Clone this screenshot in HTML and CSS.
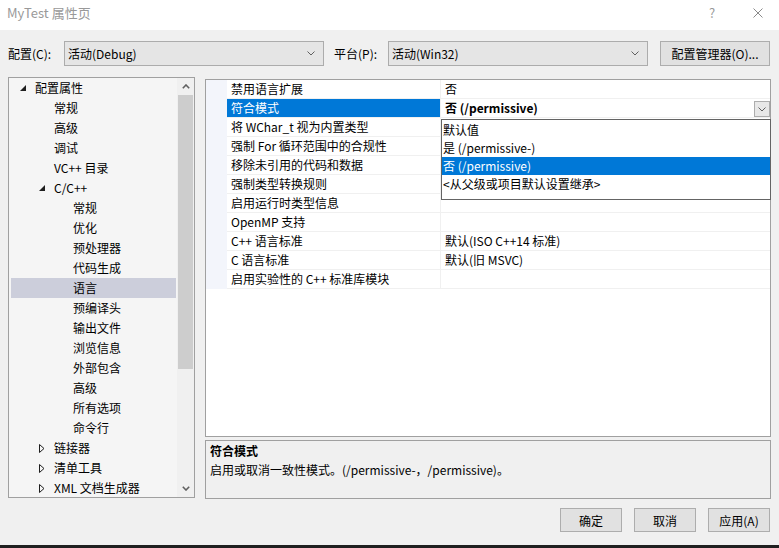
FILE: index.html
```html
<!DOCTYPE html>
<html lang="zh-CN">
<head>
<meta charset="utf-8">
<title>MyTest 属性页</title>
<link rel="stylesheet" href="styles.css">
</head>
<body>
<div class="window">
  <div class="titlebar">
    <span class="title">MyTest 属性页</span>
    <span class="tb-help">?</span>
    <svg class="tb-close" width="10" height="10" viewBox="0 0 10 10"><path d="M0.5 0.5 L9.5 9.5 M9.5 0.5 L0.5 9.5" stroke="#8a8a8a" stroke-width="1" fill="none"/></svg>
  </div>

  <div class="config-row">
    <span class="lbl lbl-config">配置(C):</span>
    <div class="combo"><span class="combo-text">活动(Debug)</span><svg width="8" height="5" viewBox="0 0 8 5"><path d="M0.5 0.5 L4 4 L7.5 0.5" stroke="#606060" fill="none"/></svg></div>
    <span class="lbl lbl-platform">平台(P):</span>
    <div class="combo"><span class="combo-text">活动(Win32)</span><svg width="8" height="5" viewBox="0 0 8 5"><path d="M0.5 0.5 L4 4 L7.5 0.5" stroke="#606060" fill="none"/></svg></div>
    <button class="btn btn-manager">配置管理器(O)...</button>
  </div>

  <div class="main">
    <div class="tree">
      <ul class="tree-list">
        <li class="node l0"><span class="tg"><svg width="6" height="6" viewBox="0 0 6 6"><path d="M6 0 L6 6 L0 6 Z" fill="#1e1e1e"/></svg></span>配置属性</li>
        <li class="node l1"><span class="tg"></span>常规</li>
        <li class="node l1"><span class="tg"></span>高级</li>
        <li class="node l1"><span class="tg"></span>调试</li>
        <li class="node l1"><span class="tg"></span>VC++ 目录</li>
        <li class="node l1"><span class="tg"><svg width="6" height="6" viewBox="0 0 6 6"><path d="M6 0 L6 6 L0 6 Z" fill="#1e1e1e"/></svg></span>C/C++</li>
        <li class="node l2"><span class="tg"></span>常规</li>
        <li class="node l2"><span class="tg"></span>优化</li>
        <li class="node l2"><span class="tg"></span>预处理器</li>
        <li class="node l2"><span class="tg"></span>代码生成</li>
        <li class="node l2 sel"><span class="tg"></span>语言</li>
        <li class="node l2"><span class="tg"></span>预编译头</li>
        <li class="node l2"><span class="tg"></span>输出文件</li>
        <li class="node l2"><span class="tg"></span>浏览信息</li>
        <li class="node l2"><span class="tg"></span>外部包含</li>
        <li class="node l2"><span class="tg"></span>高级</li>
        <li class="node l2"><span class="tg"></span>所有选项</li>
        <li class="node l2"><span class="tg"></span>命令行</li>
        <li class="node l1"><span class="tg"><svg width="6" height="9" viewBox="0 0 6 9"><path d="M0.5 0.5 L5 4.5 L0.5 8.5 Z" stroke="#1e1e1e" fill="none"/></svg></span>链接器</li>
        <li class="node l1"><span class="tg"><svg width="6" height="9" viewBox="0 0 6 9"><path d="M0.5 0.5 L5 4.5 L0.5 8.5 Z" stroke="#1e1e1e" fill="none"/></svg></span>清单工具</li>
        <li class="node l1"><span class="tg"><svg width="6" height="9" viewBox="0 0 6 9"><path d="M0.5 0.5 L5 4.5 L0.5 8.5 Z" stroke="#1e1e1e" fill="none"/></svg></span>XML 文档生成器</li>
      </ul>
      <div class="vscroll">
        <div class="sb-btn"><svg width="8" height="5" viewBox="0 0 8 5"><path d="M0.8 4.2 L4 1 L7.2 4.2" stroke="#606060" stroke-width="1.6" fill="none"/></svg></div>
        <div class="sb-thumb"></div>
        <div class="sb-space"></div>
        <div class="sb-btn"><svg width="8" height="5" viewBox="0 0 8 5"><path d="M0.8 0.8 L4 4 L7.2 0.8" stroke="#606060" stroke-width="1.6" fill="none"/></svg></div>
      </div>
    </div>

    <div class="right">
      <div class="grid">
        <div class="row"><div class="gut"></div><div class="cell name">禁用语言扩展</div><div class="cell value">否</div></div>
        <div class="row sel"><div class="gut"></div><div class="cell name">符合模式</div><div class="cell value"><b class="val-bold">否 (/permissive)</b><span class="dd-btn"><svg width="8" height="5" viewBox="0 0 8 5"><path d="M0.5 0.5 L4 4 L7.5 0.5" stroke="#606060" fill="none"/></svg></span></div></div>
        <div class="row"><div class="gut"></div><div class="cell name">将 WChar_t 视为内置类型</div><div class="cell value"></div></div>
        <div class="row"><div class="gut"></div><div class="cell name">强制 For 循环范围中的合规性</div><div class="cell value"></div></div>
        <div class="row"><div class="gut"></div><div class="cell name">移除未引用的代码和数据</div><div class="cell value"></div></div>
        <div class="row"><div class="gut"></div><div class="cell name">强制类型转换规则</div><div class="cell value"></div></div>
        <div class="row"><div class="gut"></div><div class="cell name">启用运行时类型信息</div><div class="cell value"></div></div>
        <div class="row"><div class="gut"></div><div class="cell name">OpenMP 支持</div><div class="cell value"></div></div>
        <div class="row"><div class="gut"></div><div class="cell name">C++ 语言标准</div><div class="cell value">默认(ISO C++14 标准)</div></div>
        <div class="row"><div class="gut"></div><div class="cell name">C 语言标准</div><div class="cell value">默认(旧 MSVC)</div></div>
        <div class="row"><div class="gut"></div><div class="cell name">启用实验性的 C++ 标准库模块</div><div class="cell value"></div></div>
        <ul class="dropdown">
          <li class="dd-item">默认值</li>
          <li class="dd-item">是 (/permissive-)</li>
          <li class="dd-item sel">否 (/permissive)</li>
          <li class="dd-item">&lt;从父级或项目默认设置继承&gt;</li>
        </ul>
      </div>
      <div class="desc">
        <div class="desc-title">符合模式</div>
        <div class="desc-text">启用或取消一致性模式。(/permissive-，/permissive)。</div>
      </div>
    </div>
  </div>

  <div class="footer">
    <button class="btn btn-foot">确定</button>
    <button class="btn btn-foot">取消</button>
    <button class="btn btn-foot">应用(A)</button>
  </div>
</div>
</body>
</html>
```

FILE: styles.css
```css
* {
  box-sizing: border-box;
  margin: 0;
  padding: 0;
}

html, body {
  width: 779px;
  height: 548px;
  overflow: hidden;
}

body {
  background: #1f1f1f;
  font-family: "Microsoft YaHei UI", "Noto Sans CJK SC", "Noto Sans", sans-serif;
  font-size: 12px;
  color: #000;
}

.window {
  height: 545px;
  background: #f0f0f0;
  display: flex;
  flex-direction: column;
}

/* title bar */
.titlebar {
  height: 30px;
  background: #fff;
  display: flex;
  align-items: flex-start;
  padding: 0 16px 0 7px;
  color: #999;
  line-height: 26px;
}

.title {
  flex: 1;
  font-size: 13px;
}

.tb-help {
  width: 12px;
  text-align: center;
  font-size: 13px;
  margin-right: 35px;
}

.tb-close {
  margin-top: 8px;
}

/* config row */
.config-row {
  display: flex;
  align-items: center;
  height: 25px;
  margin-top: 11px;
  padding-left: 8px;
}

.lbl-config {
  width: 56px;
}

.lbl-platform {
  width: 54px;
  margin-left: 10px;
}

.combo {
  width: 260px;
  height: 25px;
  border: 1px solid #acacac;
  background: #e5e5e5;
  display: flex;
  align-items: center;
  padding: 0 8px 0 3px;
}

.combo-text {
  flex: 1;
}

.btn {
  border: 1px solid #adadad;
  background: #e1e1e1;
  font: inherit;
  color: #000;
}

.btn-manager {
  margin-left: 12px;
  width: 110px;
  height: 25px;
}

/* main area */
.main {
  display: flex;
  align-items: flex-start;
  margin-top: 11px;
  padding-left: 8px;
}

.tree {
  width: 187px;
  height: 421px;
  border: 1px solid #a0a0a0;
  background: #f5f5f5;
  display: flex;
  overflow: hidden;
}

.tree-list {
  list-style: none;
  width: 167px;
  padding-left: 2px;
  margin-right: 1px;
  flex: none;
}

.node {
  height: 20px;
  line-height: 20px;
  display: flex;
  align-items: center;
  white-space: nowrap;
}

.node.l0 { padding-left: 9px; }
.node.l1 { padding-left: 28px; }
.node.l2 { padding-left: 47px; }

.node.sel {
  background: #cccedb;
}

.tg {
  width: 15px;
  flex: none;
  display: flex;
  align-items: center;
}

.vscroll {
  width: 17px;
  flex: none;
  background: #f0f0f0;
  display: flex;
  flex-direction: column;
  align-items: center;
}

.sb-btn {
  width: 17px;
  height: 17px;
  display: flex;
  align-items: center;
  justify-content: center;
}

.sb-thumb {
  width: 15px;
  height: 274px;
  background: #cdcdcd;
}

.sb-space {
  flex: 1;
}

/* right column */
.right {
  width: 566px;
  margin-left: 10px;
  margin-top: 2px;
  display: flex;
  flex-direction: column;
  gap: 3px;
}

.grid {
  height: 358px;
  border: 1px solid #a0a0a0;
  background: #fff;
  position: relative;
}

.row {
  display: grid;
  grid-template-columns: 21px 214px 1fr;
  height: 19px;
}

.gut {
  background: #f3f5fb;
}

.cell {
  border-bottom: 1px solid #f0f0f0;
  line-height: 18px;
  padding-left: 4px;
  white-space: nowrap;
  overflow: hidden;
}

.name {
  border-right: 1px solid #f0f0f0;
}

.row.sel .name {
  background: #0078d7;
  color: #fff;
}

.row.sel .value {
  display: flex;
  align-items: flex-start;
}

.val-bold {
  flex: 1;
  font-weight: bold;
}

.dd-btn {
  width: 16px;
  height: 16px;
  margin-top: 2px;
  border: 1px solid #adadad;
  background: #e8e8e8;
  display: flex;
  align-items: center;
  justify-content: center;
}

.dropdown {
  position: absolute;
  left: 235px;
  top: 39px;
  width: 330px;
  height: 81px;
  border: 1px solid #646464;
  background: #fff;
  padding-top: 1px;
  list-style: none;
}

.dd-item {
  height: 18px;
  line-height: 18px;
  padding-left: 1px;
  white-space: nowrap;
}

.dd-item.sel {
  background: #0078d7;
  color: #fff;
}

.desc {
  height: 59px;
  border: 1px solid #a0a0a0;
  background: #f0f0f0;
  padding: 0 4px;
  line-height: 19px;
}

.desc-title {
  font-weight: bold;
}

/* footer */
.footer {
  display: flex;
  justify-content: flex-end;
  gap: 12px;
  margin-top: 9px;
  padding-right: 9px;
}

.btn-foot {
  width: 62px;
  height: 24px;
}
```
